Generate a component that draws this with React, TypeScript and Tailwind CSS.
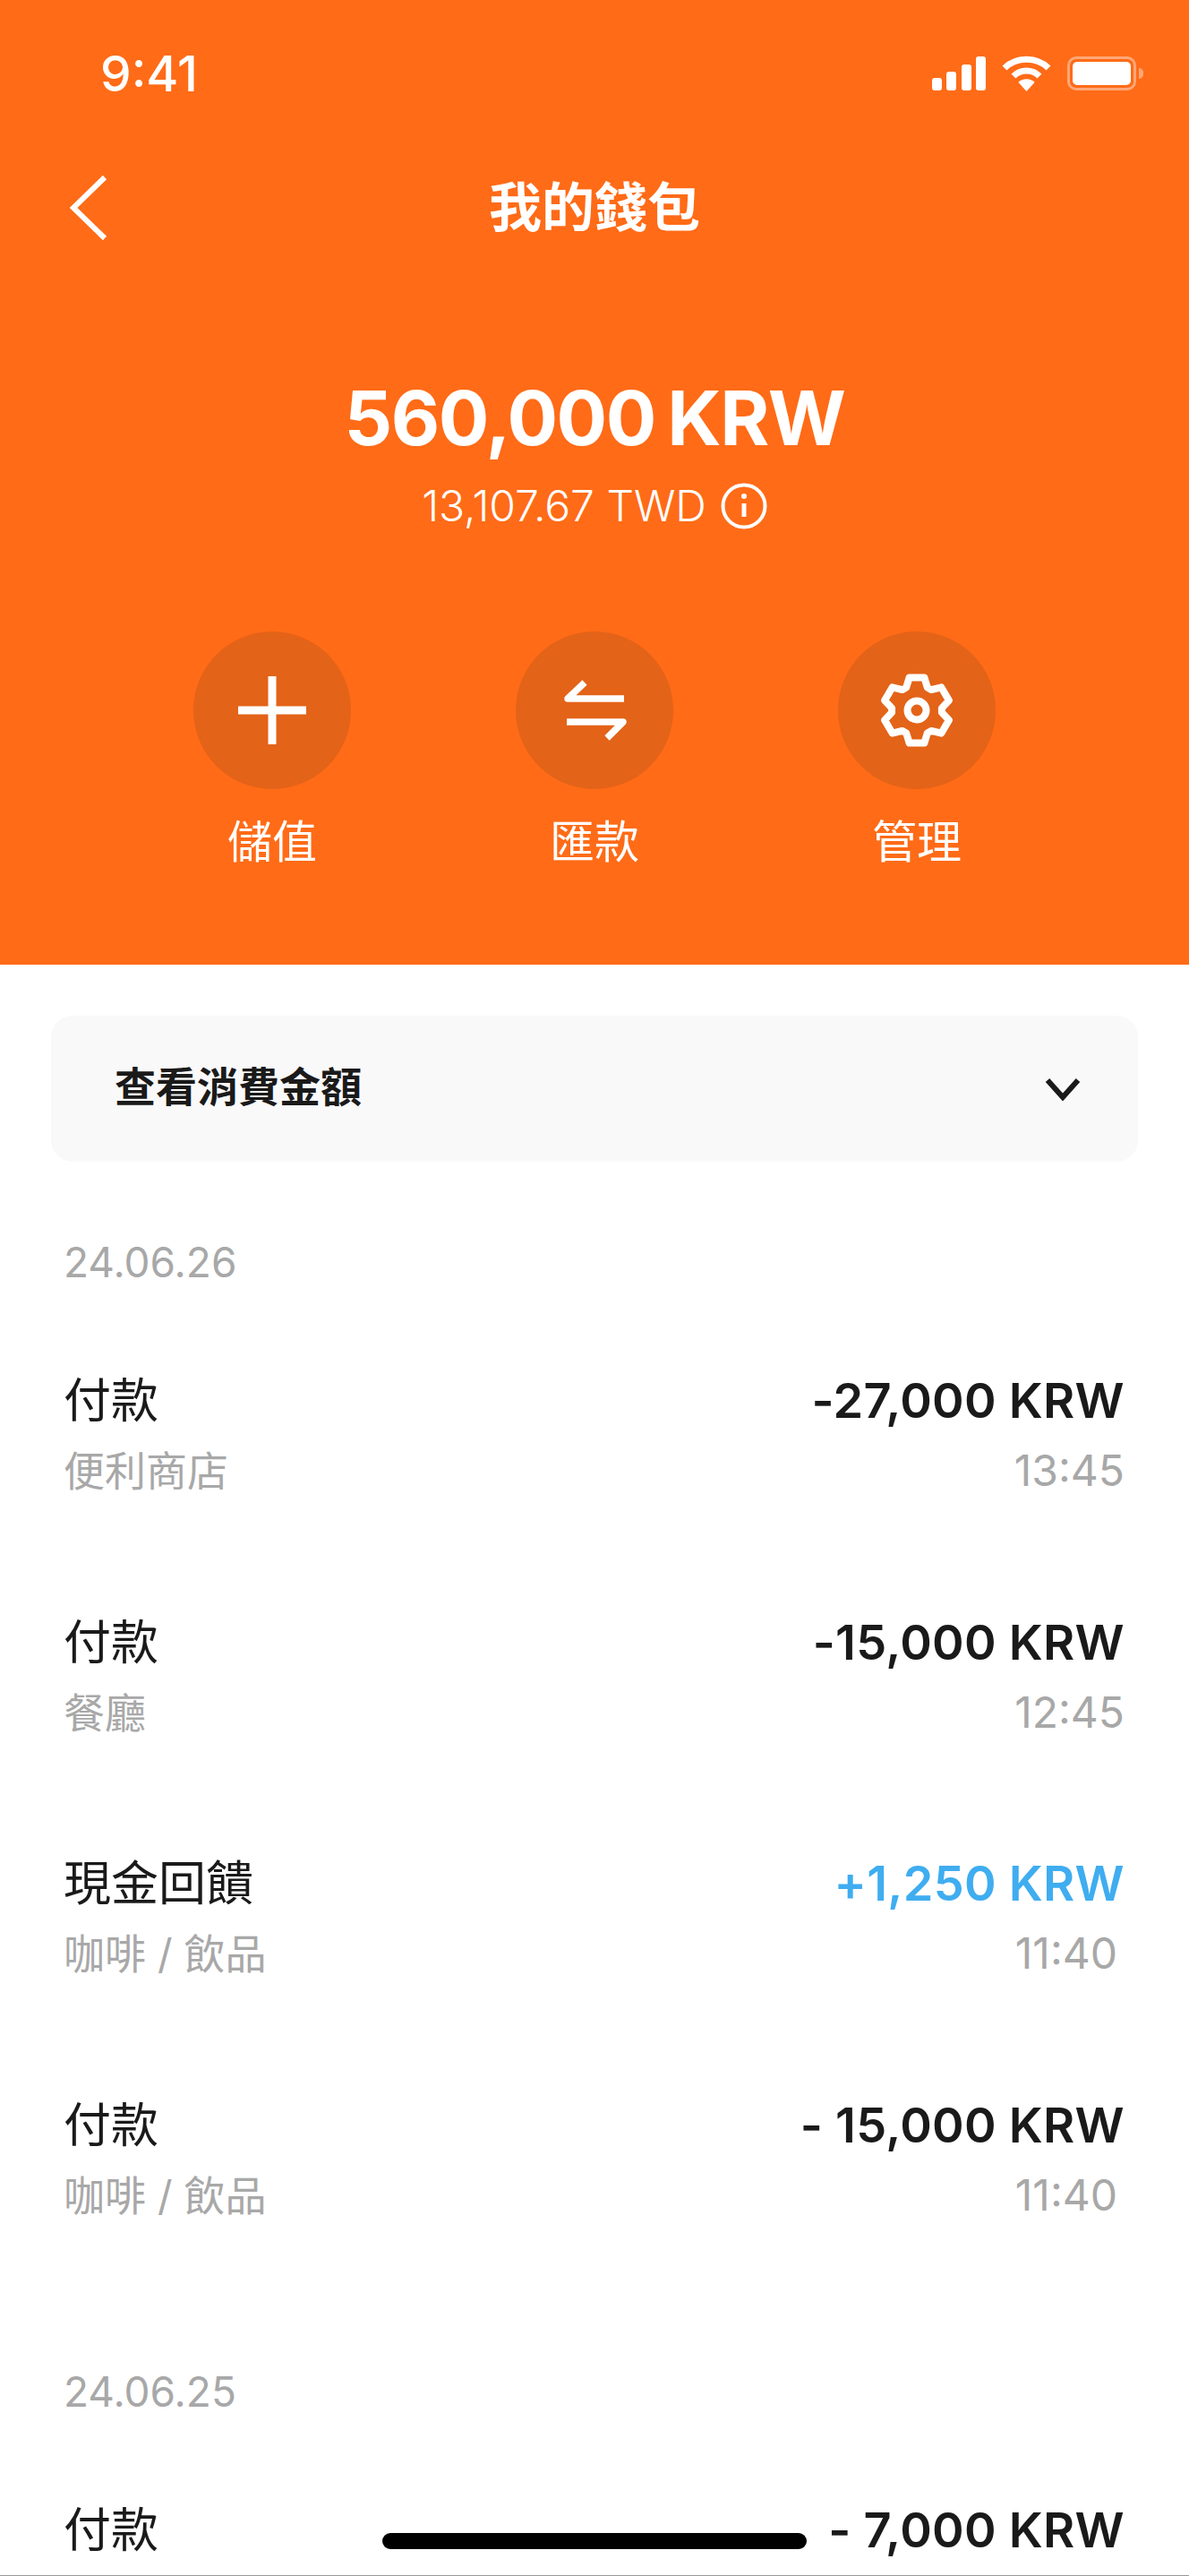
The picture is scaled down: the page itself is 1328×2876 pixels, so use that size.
import React from "react";

const latin = "font-['Inter','Noto_Sans_CJK_TC',sans-serif]";

const gearPath = (() => {
  const pts: string[] = [];
  const c = 45;
  const at = (r: number, deg: number) => {
    const t = ((deg - 90) * Math.PI) / 180;
    return `${(c + r * Math.cos(t)).toFixed(1)} ${(c + r * Math.sin(t)).toFixed(1)}`;
  };
  for (let i = 0; i < 6; i++) {
    const a = i * 60;
    pts.push(at(37.5, a - 13), at(37.5, a + 13), at(28, a + 25), at(28, a + 35));
  }
  return `M${pts.join("L")}Z`;
})();

function Gear() {
  return (
    <svg width="90" height="90" viewBox="0 0 90 90" fill="none" stroke="#fff" strokeWidth="8" strokeLinejoin="round">
      <path d={gearPath} />
      <circle cx="45" cy="45" r="10.500" />
    </svg>
  );
}

function Action({ label, icon }: { label: string; icon: React.ReactNode }) {
  return (
    <div className="flex w-[360px] flex-col items-center">
      <div className="flex h-[176px] w-[176px] items-center justify-center rounded-full bg-[#e36318]">{icon}</div>
      <div className="mt-[30px] text-[50px] leading-[58px] text-white">{label}</div>
    </div>
  );
}

function Row({ title, sub, amount, time, blue, timeInset }: { title: string; sub: string; amount: string; time: string; blue?: boolean; timeInset?: boolean }) {
  return (
    <div className="flex h-[269.5px] flex-col">
      <div className="flex h-[62px] items-center justify-between">
        <span className="text-[53px] leading-[62px] text-[#1a1a1a]">{title}</span>
        <span className={`text-[54px] font-semibold leading-[62px] tracking-[0.3px] ${blue ? "text-[#3fadf0]" : "text-[#1a1a1a]"}`}>{amount}</span>
      </div>
      <div className="mt-[16px] flex h-[62px] items-center justify-between">
        <span className="text-[46px] leading-[62px] text-[#a8a8a8]">{sub}</span>
        <span className={`text-[48px] leading-[62px] text-[#a8a8a8] ${timeInset ? "pr-[8px]" : ""}`}>{time}</span>
      </div>
    </div>
  );
}

export default function App() {
  return (
    <div className={`relative h-[2876px] w-[1328px] overflow-hidden bg-white ${latin}`}>
      <div className="h-[1077px] bg-[#ff6b17]">
        <div className="flex h-[164px] items-center justify-between pl-[112px] pr-[51px]">
          <span className="text-[55px] font-medium text-white">9:41</span>
          <div className="flex items-center gap-[18px]">
            <svg width="60" height="38" viewBox="0 0 60 38" fill="#fff">
              <rect x="0" y="24" width="11" height="14" rx="3" />
              <rect x="16" y="17" width="11" height="21" rx="3" />
              <rect x="33" y="9" width="11" height="29" rx="3" />
              <rect x="49" y="0" width="11" height="38" rx="3" />
            </svg>
            <svg width="55" height="40" viewBox="0 0 55 40" fill="none" stroke="#fff" strokeWidth="7">
              <path d="M3 14C16 1 39 1 52 14" />
              <path d="M13 23c8-8 21-8 29 0" />
              <path d="M27.500 40l-9-10c4-5 14-5 18 0z" fill="#fff" stroke="none" />
            </svg>
            <div className="flex items-center">
              <div className="flex h-[38px] w-[77px] items-center rounded-[10px] border-[3px] border-[#ffa777] p-[3px]">
                <div className="h-full w-full rounded-[5px] bg-white" />
              </div>
              <div className="ml-[3px] h-[12px] w-[5px] rounded-r-full bg-[#ffa777]" />
            </div>
          </div>
        </div>
        <div className="relative flex h-[136px] items-center justify-center">
          <svg className="absolute left-[76px] top-[30px]" width="46" height="76" viewBox="0 0 46 76" fill="none" stroke="#fff" strokeWidth="6">
            <path d="M41 4L6 38l35 34" />
          </svg>
          <span className="text-[59px] font-bold leading-[70px] text-white">我的錢包</span>
        </div>
        <div className="mt-[117px] text-center text-[84px] font-bold leading-[100px] tracking-[-1.5px] text-white [word-spacing:-5px]">560,000 KRW</div>
        <div className="mt-[20px] flex items-center justify-center gap-[16px] text-[48px] font-light leading-[56px] text-white">
          <span>13,107.67 TWD</span>
          <svg width="52" height="52" viewBox="0 0 52 52" fill="none" stroke="#fff" strokeWidth="4">
            <circle cx="26" cy="26" r="23.500" />
            <path d="M26 23v15" strokeWidth="5" />
            <circle cx="26" cy="15" r="3" fill="#fff" stroke="none" />
          </svg>
        </div>
        <div className="mt-[112px] flex justify-center">
          <Action
            label="儲值"
            icon={
              <svg width="76" height="76" viewBox="0 0 76 76" fill="none" stroke="#fff" strokeWidth="9">
                <path d="M38 0v76M0 38h76" />
              </svg>
            }
          />
          <Action
            label="匯款"
            icon={
              <svg width="72" height="72" viewBox="0 0 72 72" fill="none" stroke="#fff" strokeWidth="7.500" strokeLinejoin="round">
                <path d="M69 23H6L25 5" />
                <path d="M5 49h63L50 67" />
              </svg>
            }
          />
          <Action label="管理" icon={<Gear />} />
        </div>
      </div>
      <div className="px-[57px] pt-[57px]">
        <div className="flex h-[163px] items-center justify-between rounded-[24px] bg-[#f9f9f9] pl-[71px] pr-[64px]">
          <span className="pb-[6px] text-[46px] font-bold leading-[56px] text-[#1a1a1a]">查看消費金額</span>
          <svg width="40" height="26" viewBox="0 0 40 26" fill="none" stroke="#1a1a1a" strokeWidth="6">
            <path d="M3 3l17 19L37 3" />
          </svg>
        </div>
      </div>
      <div className="pl-[71px] pr-[72px]">
        <div className="mt-[84px] h-[152px] text-[46px] leading-[56px] text-[#a8a8a8]">24.06.26</div>
        <Row title="付款" sub="便利商店" amount="-27,000 KRW" time="13:45" />
        <Row title="付款" sub="餐廳" amount="-15,000 KRW" time="12:45" />
        <Row title="現金回饋" sub="咖啡 / 飲品" amount="+1,250 KRW" time="11:40" blue timeInset />
        <Row title="付款" sub="咖啡 / 飲品" amount="- 15,000 KRW" time="11:40" timeInset />
        <div className="mt-[31px] h-[152px] text-[46px] leading-[56px] text-[#a8a8a8]">24.06.25</div>
        <Row title="付款" sub="" amount="- 7,000 KRW" time="" />
      </div>
      <div className="absolute bottom-[30px] left-[427px] h-[18px] w-[474px] rounded-full bg-black" />
      <div className="absolute bottom-0 left-0 h-px w-full bg-[#999]" />
    </div>
  );
}
